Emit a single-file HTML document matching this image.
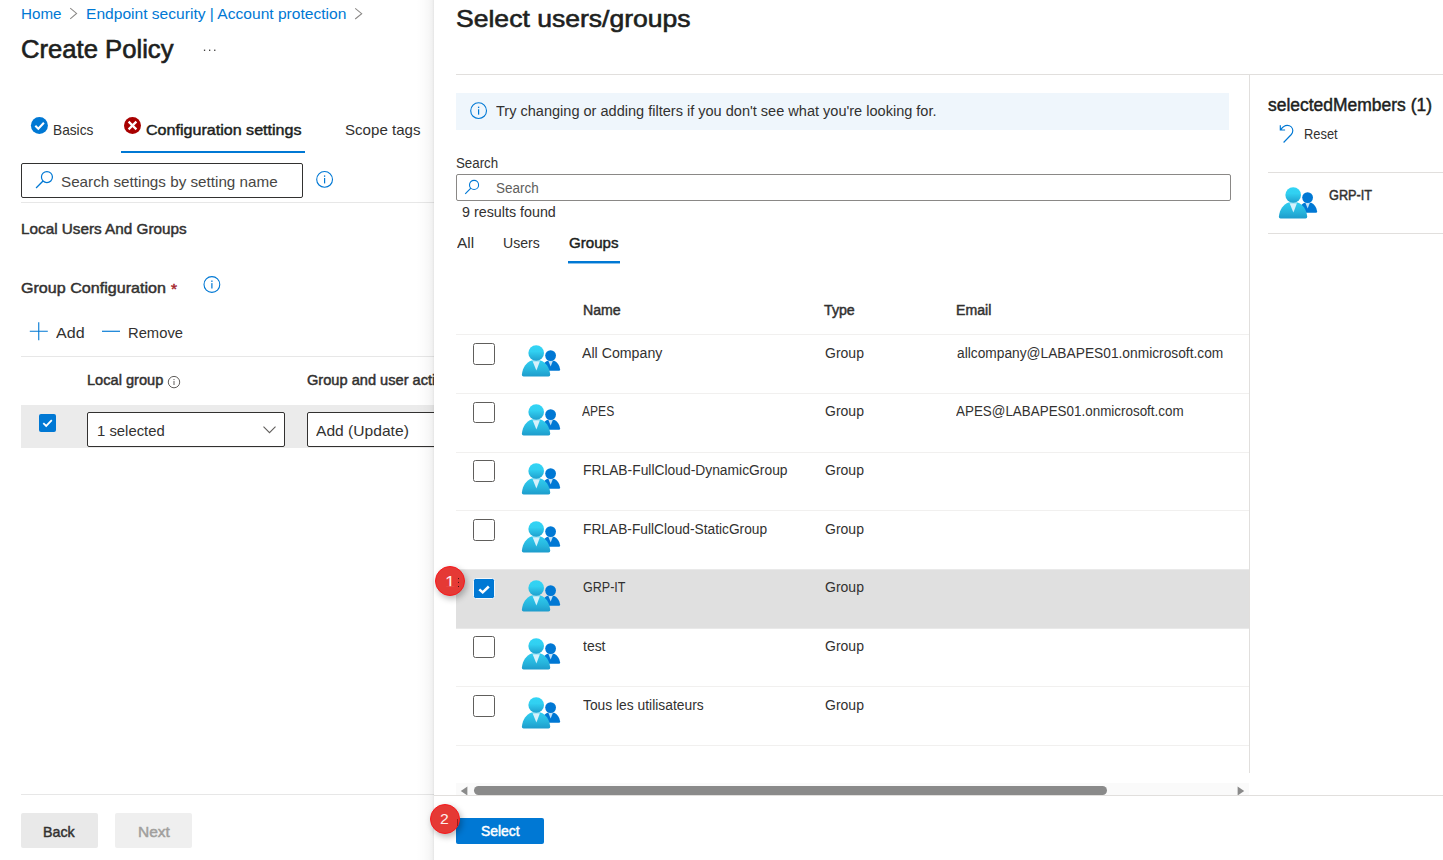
<!DOCTYPE html>
<html lang="en">
<head>
<meta charset="utf-8">
<title>Create Policy - Select users/groups</title>
<style>
*{box-sizing:border-box;margin:0;padding:0}
html,body{width:1443px;height:860px;overflow:hidden;background:#fff}
body{font-family:"Liberation Sans",sans-serif;position:relative;color:#323130}
.t{position:absolute;white-space:nowrap;line-height:20px;display:block;transform-origin:0 50%}
.a{position:absolute;display:block}
.hl{position:absolute;height:1px;background:#e1dfdd}
#left{position:absolute;left:0;top:0;width:434px;height:860px;overflow:hidden;background:#fff}
#panel{position:absolute;left:434px;top:0;width:1009px;height:860px;background:#fff;}
#pin{position:absolute;left:-434px;top:0;width:1443px;height:860px}
.cb{position:absolute;left:473.2px;width:21.6px;height:21.6px;border:1px solid #605e5c;border-radius:2.5px;background:#fff}
.gi{position:absolute;width:40px;height:34px}
</style>
</head>
<body>
<svg width="0" height="0" style="position:absolute">
<defs>
<linearGradient id="gg" x1="0" y1="0" x2="0" y2="1"><stop offset="0" stop-color="#32d4f5"/><stop offset="1" stop-color="#198ab3"/></linearGradient>
<linearGradient id="gh" x1="0" y1="0" x2="0" y2="1"><stop offset="0" stop-color="#32d4f5"/><stop offset="0.4" stop-color="#31d0f1"/><stop offset="1" stop-color="#1fa0ce"/></linearGradient>
<linearGradient id="gb" x1="0" y1="0" x2="0" y2="1"><stop offset="0" stop-color="#30cdf0"/><stop offset="0.6" stop-color="#27b4dc"/><stop offset="1" stop-color="#1e9ccc"/></linearGradient>
<symbol id="grp" viewBox="0 0 40 34">
<path d="M24.2 26.8 L37.9 26.8 Q39.3 26.8 39.1 25.3 C38.4 21.2 36.3 18 33.2 16.8 L26.4 16.8 C24.5 17.6 23 19 22 21 Z" fill="#0078d4"/>
<circle cx="29.6" cy="11.6" r="5.4" fill="#0078d4"/>
<path d="M27.4 17 L31.8 17 L29.7 22.6 Z" fill="#c3e1f6"/>
<path d="M2.6 32.4 Q0.7 32.4 0.9 30.4 C1.7 23.6 5.2 18.4 10.6 16.5 L19.6 16.5 C25 18.4 28.4 23.6 29.2 30.4 Q29.4 32.4 27.5 32.4 Z" fill="url(#gb)"/>
<circle cx="15.2" cy="9" r="7.8" fill="url(#gh)"/>
<path d="M11.6 17.2 L18.9 17.2 L15.4 26.6 Z" fill="#d6f1fb"/>
</symbol>
<symbol id="info" viewBox="0 0 18 18">
<circle cx="9" cy="9" r="7.9" fill="none" stroke="#0078d4" stroke-width="1.1"/>
<rect x="8.4" y="7.6" width="1.2" height="5.4" fill="#0078d4"/>
<rect x="8.35" y="5" width="1.3" height="1.4" fill="#0078d4"/>
</symbol>
<symbol id="mag" viewBox="0 0 18 18">
<circle cx="11.3" cy="6.7" r="5.2" fill="none" stroke="#0078d4" stroke-width="1.15"/>
<path d="M7.6 10.4 L1 17" stroke="#0078d4" stroke-width="1.2" fill="none"/>
</symbol>
</defs>
</svg>

<div id="left">
  <!-- breadcrumb chevrons, more dots -->
  <svg class="a" style="left:69px;top:7px" width="9" height="13" viewBox="0 0 9 13"><path d="M1.2 1.1 L7.6 6.45 L1.2 11.8" stroke="#8a8886" stroke-width="1.05" fill="none"/></svg>
  <svg class="a" style="left:354px;top:7px" width="9" height="13" viewBox="0 0 9 13"><path d="M1.2 1.3 L7.7 6.65 L1.2 12" stroke="#8a8886" stroke-width="1.05" fill="none"/></svg>
  <svg class="a" style="left:203px;top:49px" width="14" height="3" viewBox="0 0 14 3"><rect x="0.9" y="0.6" width="1.3" height="1.3" fill="#323130"/><rect x="6" y="0.6" width="1.3" height="1.3" fill="#323130"/><rect x="11.1" y="0.6" width="1.3" height="1.3" fill="#323130"/></svg>
  <!-- tab icons -->
  <svg class="a" style="left:30px;top:116px" width="20" height="20" viewBox="0 0 20 20"><g transform="translate(0.4,0.5)"><circle cx="9" cy="9" r="8.5" fill="#0078d4"/><path d="M4.9 9.3 L7.9 12.2 L13.5 6.2" stroke="#fff" stroke-width="2.1" fill="none"/></g></svg>
  <svg class="a" style="left:123px;top:116px" width="20" height="20" viewBox="0 0 20 20"><g transform="translate(0.5,0.5)"><circle cx="9" cy="9" r="8.5" fill="#a80000"/><path d="M5.1 5.1 L12.9 12.9 M12.9 5.1 L5.1 12.9" stroke="#fff" stroke-width="2.2" fill="none"/></g></svg>
  <div class="a" style="left:121px;top:151px;width:184px;height:2px;background:#0078d4"></div>
  <!-- search box -->
  <div class="a" style="left:21px;top:163px;width:282px;height:35px;border:1px solid #323130;border-radius:2px;background:#fff"></div>
  <svg class="a" style="left:35.4px;top:170.2px" width="19" height="19"><use href="#mag"/></svg>
  <svg class="a" style="left:315px;top:170px" width="20" height="20"><use href="#info" x="0.6" y="0.4" width="18" height="18"/></svg>
  <div class="hl" style="left:21px;top:202px;width:413px;background:#e7e7e7"></div>
  <svg class="a" style="left:202px;top:275px" width="20" height="20"><use href="#info" x="0.9" y="0.5" width="18" height="18"/></svg>
  <!-- add / remove -->
  <svg class="a" style="left:29px;top:321px" width="20" height="21" viewBox="0 0 20 21"><path d="M9.75 1.3 V19.3 M0.8 10.3 H18.8" stroke="#0078d4" stroke-width="1.1" fill="none"/></svg>
  <svg class="a" style="left:101px;top:329px" width="20" height="4" viewBox="0 0 20 4"><rect x="1" y="1.7" width="18" height="1.15" fill="#0078d4"/></svg>
  <div class="hl" style="left:21px;top:356px;width:413px;background:#e7e7e7"></div>
  <!-- small info -->
  <svg class="a" style="left:167px;top:375px" width="14" height="14" viewBox="-0.5 -0.6 14 14"><circle cx="6.5" cy="6.5" r="5.7" fill="none" stroke="#605e5c" stroke-width="1"/><rect x="6" y="5.4" width="1" height="4" fill="#605e5c"/><rect x="6" y="3.4" width="1" height="1.1" fill="#605e5c"/></svg>
  <!-- row -->
  <div class="a" style="left:21px;top:405px;width:413px;height:43px;background:#ebebeb"></div>
  <div class="a" style="left:39px;top:414px;width:17px;height:18px;background:#0078d4;border-radius:2px"></div>
  <svg class="a" style="left:39px;top:414px" width="18" height="18" viewBox="0 0 18 18"><path d="M4.3 9.2 L7.2 12 L12.8 6.2" stroke="#fff" stroke-width="1.8" fill="none"/></svg>
  <div class="a" style="left:87px;top:412px;width:198px;height:34.6px;border:1px solid #323130;border-radius:2px;background:#fff"></div>
  <svg class="a" style="left:262px;top:424px" width="15" height="11" viewBox="0 0 15 11"><path d="M1.5 2.6 L7.5 8.6 L13.5 2.6" stroke="#605e5c" stroke-width="1.1" fill="none"/></svg>
  <div class="a" style="left:307px;top:412px;width:198px;height:34.6px;border:1px solid #323130;border-radius:2px;background:#fff"></div>
  <!-- footer -->
  <div class="hl" style="left:21px;top:794px;width:413px;background:#e7e7e7"></div>
  <div class="a" style="left:21px;top:813px;width:77px;height:35px;background:#e9e9e9;border-radius:2px"></div>
  <div class="a" style="left:115px;top:813px;width:77px;height:35px;background:#efefef;border-radius:2px"></div>
<span class="t" id="t0" style="left:21.27px;top:4.00px;font-size:15px;font-weight:400;color:#0078d4;transform:scaleX(1.0123);">Home</span>
<span class="t" id="t1" style="left:86.18px;top:4.00px;font-size:15px;font-weight:400;color:#0078d4;transform:scaleX(1.0385);">Endpoint security | Account protection</span>
<span class="t" id="t2" style="left:21.32px;top:39.14px;font-size:25px;font-weight:400;color:#201f1e;transform:scaleX(1.0255);-webkit-text-stroke:0.62px #201f1e;">Create Policy</span>
<span class="t" id="t3" style="left:53.04px;top:119.80px;font-size:15px;font-weight:400;color:#323130;transform:scaleX(0.9139);">Basics</span>
<span class="t" id="t4" style="left:146.09px;top:119.80px;font-size:15px;font-weight:400;color:#201f1e;transform:scaleX(1.0718);-webkit-text-stroke:0.46px #201f1e;">Configuration settings</span>
<span class="t" id="t5" style="left:345.14px;top:119.80px;font-size:15px;font-weight:400;color:#323130;transform:scaleX(1.0059);">Scope tags</span>
<span class="t" id="t6" style="left:61.13px;top:172.00px;font-size:15px;font-weight:400;color:#484644;transform:scaleX(1.0149);">Search settings by setting name</span>
<span class="t" id="t7" style="left:20.97px;top:219.00px;font-size:15px;font-weight:400;color:#323130;transform:scaleX(1.0187);-webkit-text-stroke:0.46px #323130;">Local Users And Groups</span>
<span class="t" id="t8" style="left:20.99px;top:278.00px;font-size:15px;font-weight:400;color:#323130;transform:scaleX(1.0726);-webkit-text-stroke:0.46px #323130;">Group Configuration</span>
<span class="t" id="t9" style="left:170.95px;top:279.30px;font-size:15px;font-weight:400;color:#a4262c;transform:scaleX(1.0301);-webkit-text-stroke:0.46px #a4262c;">*</span>
<span class="t" id="t10" style="left:55.65px;top:323.00px;font-size:15px;font-weight:400;color:#323130;transform:scaleX(1.0700);">Add</span>
<span class="t" id="t11" style="left:128.37px;top:323.00px;font-size:15px;font-weight:400;color:#323130;transform:scaleX(0.9841);">Remove</span>
<span class="t" id="t12" style="left:87.24px;top:370.35px;font-size:14px;font-weight:400;color:#323130;transform:scaleX(1.0426);-webkit-text-stroke:0.46px #323130;">Local group</span>
<span class="t" id="t13" style="left:306.78px;top:370.35px;font-size:14px;font-weight:400;color:#323130;transform:scaleX(1.0434);-webkit-text-stroke:0.46px #323130;">Group and user actions</span>
<span class="t" id="t14" style="left:97.42px;top:421.00px;font-size:15px;font-weight:400;color:#323130;transform:scaleX(0.9909);">1 selected</span>
<span class="t" id="t15" style="left:316.00px;top:421.00px;font-size:15px;font-weight:400;color:#323130;transform:scaleX(1.0405);">Add (Update)</span>
<span class="t" id="t16" style="left:43.30px;top:822.00px;font-size:15px;font-weight:400;color:#323130;transform:scaleX(0.9483);-webkit-text-stroke:0.46px #323130;">Back</span>
<span class="t" id="t17" style="left:137.60px;top:822.00px;font-size:15px;font-weight:400;color:#a19f9d;transform:scaleX(1.0354);-webkit-text-stroke:0.46px #a19f9d;">Next</span>
</div>

<div class="a" style="left:416px;top:0;width:18px;height:860px;background:linear-gradient(to right,rgba(0,0,0,0),rgba(0,0,0,.012) 40%,rgba(0,0,0,.03) 72%,rgba(0,0,0,.055) 90%,rgba(0,0,0,.1))"></div>
<div id="panel"><div id="pin">
  <div class="hl" style="left:456px;top:74px;width:987px"></div>
  <div class="a" style="left:1249px;top:74px;width:1px;height:699px;background:#e1dfdd"></div>
  <!-- info bar -->
  <div class="a" style="left:456px;top:93px;width:773px;height:37px;background:#eff6fc"></div>
  <svg class="a" style="left:469px;top:101px" width="20" height="20"><use href="#info" x="0.6" y="0.65" width="18" height="18"/></svg>
  <!-- search -->
  <div class="a" style="left:456px;top:174px;width:775px;height:27px;border:1px solid #8a8886;border-radius:2px;background:#fff"></div>
  <svg class="a" style="left:464px;top:179px" width="17" height="17" viewBox="0 0 17 17"><circle cx="10.05" cy="5.9" r="4.55" fill="none" stroke="#0078d4" stroke-width="1.1"/><path d="M6.9 9.2 L1.2 14.9" stroke="#0078d4" stroke-width="1.15" fill="none"/></svg>
  <div class="a" style="left:568px;top:261px;width:52px;height:2px;background:#0078d4"></div><div class="a" style="left:568px;top:263px;width:52px;height:1px;background:#0078d4;opacity:.45"></div>
  <!-- rows -->
  <div class="a" style="left:456px;top:570px;width:793px;height:58px;background:#e0e0e0"></div><div class="a" style="left:456px;top:569px;width:793px;height:1px;background:#e0e0e0;opacity:.7"></div><div class="a" style="left:456px;top:628px;width:793px;height:1px;background:#e0e0e0;opacity:.7"></div>
  <div class="hl" style="left:456px;top:334px;width:793px;background:#f1f0ef"></div>
  <div class="hl" style="left:456px;top:393px;width:793px;background:#f1f0ef"></div>
  <div class="hl" style="left:456px;top:452px;width:793px;background:#f1f0ef"></div>
  <div class="hl" style="left:456px;top:510px;width:793px;background:#f1f0ef"></div>
  <div class="hl" style="left:456px;top:686px;width:793px;background:#f1f0ef"></div>
  <div class="hl" style="left:456px;top:745px;width:793px;background:#f1f0ef"></div>
  <div class="cb" style="top:343.2px"></div>
  <div class="cb" style="top:401.6px"></div>
  <div class="cb" style="top:460.4px"></div>
  <div class="cb" style="top:519.2px"></div>
  <div class="cb" style="top:577.7px;background:#0078d4;border-color:#f3f8fc"></div>
  <svg class="a" style="left:474px;top:578.5px" width="20" height="20" viewBox="0 0 20 20"><path d="M5.3 10.3 L8.7 13.4 L14.8 7.5" stroke="#fff" stroke-width="2.5" fill="none"/></svg>
  <div class="cb" style="top:636px"></div>
  <div class="cb" style="top:695.3px"></div>
  <svg class="gi" style="left:521px;top:344.2px"><use href="#grp"/></svg>
  <svg class="gi" style="left:521px;top:402.9px"><use href="#grp"/></svg>
  <svg class="gi" style="left:521px;top:461.6px"><use href="#grp"/></svg>
  <svg class="gi" style="left:521px;top:520.3px"><use href="#grp"/></svg>
  <svg class="gi" style="left:521px;top:579px"><use href="#grp"/></svg>
  <svg class="gi" style="left:521px;top:637px"><use href="#grp"/></svg>
  <svg class="gi" style="left:521px;top:695.7px"><use href="#grp"/></svg>
  <!-- scrollbar -->
  <div class="a" style="left:456px;top:783px;width:793px;height:12px;background:#fafafa"></div>
  <div class="a" style="left:474px;top:786px;width:633px;height:8.5px;background:#8a8a8a;border-radius:4.5px"></div>
  <svg class="a" style="left:460px;top:785.5px" width="8" height="10" viewBox="0 0 8 10"><path d="M7.4 0.6 L0.8 5 L7.4 9.4 Z" fill="#8a8a8a"/></svg>
  <svg class="a" style="left:1237px;top:785.5px" width="8" height="10" viewBox="0 0 8 10"><path d="M0.6 0.6 L7.2 5 L0.6 9.4 Z" fill="#8a8a8a"/></svg>
  <div class="hl" style="left:434px;top:795px;width:1009px"></div>
  <!-- select button -->
  <div class="a" style="left:456px;top:818px;width:88px;height:25.6px;background:#0078d4;border-radius:2px"></div>
  <!-- right list -->
  <svg class="a" style="left:1278px;top:124px" width="17" height="20" viewBox="0 0 17 20"><path d="M2.3 1.2 V6 H7.1 M2.8 5.6 C4.5 3 6.5 1.3 9.2 1.3 C12.4 1.3 14.8 3.6 14.8 6.6 C14.8 8.3 14.2 9.5 13.3 10.5 L5.6 18.5" stroke="#0078d4" stroke-width="1.15" fill="none"/></svg>
  <div class="hl" style="left:1268px;top:172px;width:175px"></div>
  <svg class="gi" style="left:1277.9px;top:186.2px"><use href="#grp"/></svg>
  <div class="hl" style="left:1268px;top:233px;width:175px"></div>
<span class="t" id="t18" style="left:455.95px;top:8.51px;font-size:24.5px;font-weight:400;color:#201f1e;transform:scaleX(1.0835);-webkit-text-stroke:0.61px #201f1e;">Select users/groups</span>
<span class="t" id="t19" style="left:496.25px;top:101.15px;font-size:14px;font-weight:400;color:#323130;transform:scaleX(1.0383);">Try changing or adding filters if you don't see what you're looking for.</span>
<span class="t" id="t20" style="left:456.28px;top:153.15px;font-size:14px;font-weight:400;color:#323130;transform:scaleX(0.9499);">Search</span>
<span class="t" id="t21" style="left:495.97px;top:178.35px;font-size:14px;font-weight:400;color:#605e5c;transform:scaleX(0.9628);">Search</span>
<span class="t" id="t22" style="left:461.87px;top:202.15px;font-size:14px;font-weight:400;color:#323130;transform:scaleX(1.0212);">9 results found</span>
<span class="t" id="t23" style="left:456.70px;top:233.20px;font-size:15px;font-weight:400;color:#323130;transform:scaleX(1.0222);">All</span>
<span class="t" id="t24" style="left:502.86px;top:233.20px;font-size:15px;font-weight:400;color:#323130;transform:scaleX(0.9397);">Users</span>
<span class="t" id="t25" style="left:569.35px;top:233.20px;font-size:15px;font-weight:400;color:#201f1e;transform:scaleX(1.0058);-webkit-text-stroke:0.46px #201f1e;">Groups</span>
<span class="t" id="t26" style="left:582.85px;top:299.75px;font-size:14px;font-weight:400;color:#323130;transform:scaleX(1.0095);-webkit-text-stroke:0.46px #323130;">Name</span>
<span class="t" id="t27" style="left:824.11px;top:299.75px;font-size:14px;font-weight:400;color:#323130;transform:scaleX(1.0135);-webkit-text-stroke:0.46px #323130;">Type</span>
<span class="t" id="t28" style="left:956.11px;top:299.75px;font-size:14px;font-weight:400;color:#323130;transform:scaleX(1.0087);-webkit-text-stroke:0.46px #323130;">Email</span>
<span class="t" id="t29" style="left:582.49px;top:342.85px;font-size:14px;font-weight:400;color:#323130;transform:scaleX(1.0125);">All Company</span>
<span class="t" id="t30" style="left:825.33px;top:342.85px;font-size:14px;font-weight:400;color:#323130;transform:scaleX(1.0004);">Group</span>
<span class="t" id="t31" style="left:957.24px;top:342.85px;font-size:14px;font-weight:400;color:#323130;transform:scaleX(0.9826);">allcompany@LABAPES01.onmicrosoft.com</span>
<span class="t" id="t32" style="left:582.04px;top:400.57px;font-size:14px;font-weight:400;color:#323130;transform:scaleX(0.8622);">APES</span>
<span class="t" id="t33" style="left:825.33px;top:400.57px;font-size:14px;font-weight:400;color:#323130;transform:scaleX(1.0004);">Group</span>
<span class="t" id="t34" style="left:955.81px;top:400.57px;font-size:14px;font-weight:400;color:#323130;transform:scaleX(0.9583);">APES@LABAPES01.onmicrosoft.com</span>
<span class="t" id="t35" style="left:582.56px;top:460.29px;font-size:14px;font-weight:400;color:#323130;transform:scaleX(0.9883);">FRLAB-FullCloud-DynamicGroup</span>
<span class="t" id="t36" style="left:825.33px;top:460.29px;font-size:14px;font-weight:400;color:#323130;transform:scaleX(1.0004);">Group</span>
<span class="t" id="t37" style="left:582.57px;top:519.01px;font-size:14px;font-weight:400;color:#323130;transform:scaleX(0.9819);">FRLAB-FullCloud-StaticGroup</span>
<span class="t" id="t38" style="left:825.33px;top:519.01px;font-size:14px;font-weight:400;color:#323130;transform:scaleX(1.0004);">Group</span>
<span class="t" id="t39" style="left:583.36px;top:576.73px;font-size:14px;font-weight:400;color:#323130;transform:scaleX(0.8959);">GRP-IT</span>
<span class="t" id="t40" style="left:825.33px;top:576.73px;font-size:14px;font-weight:400;color:#323130;transform:scaleX(1.0004);">Group</span>
<span class="t" id="t41" style="left:582.80px;top:636.45px;font-size:14px;font-weight:400;color:#323130;transform:scaleX(0.9967);">test</span>
<span class="t" id="t42" style="left:825.33px;top:636.45px;font-size:14px;font-weight:400;color:#323130;transform:scaleX(1.0004);">Group</span>
<span class="t" id="t43" style="left:583.12px;top:695.17px;font-size:14px;font-weight:400;color:#323130;transform:scaleX(0.9876);">Tous les utilisateurs</span>
<span class="t" id="t44" style="left:825.33px;top:695.17px;font-size:14px;font-weight:400;color:#323130;transform:scaleX(1.0004);">Group</span>
<span class="t" id="t45" style="left:1268.29px;top:95.06px;font-size:18px;font-weight:400;color:#201f1e;transform:scaleX(0.9699);-webkit-text-stroke:0.46px #201f1e;">selectedMembers (1)</span>
<span class="t" id="t46" style="left:1303.67px;top:124.15px;font-size:14px;font-weight:400;color:#323130;transform:scaleX(0.9192);">Reset</span>
<span class="t" id="t47" style="left:1329.08px;top:185.15px;font-size:14px;font-weight:400;color:#323130;transform:scaleX(0.9084);-webkit-text-stroke:0.46px #323130;">GRP-IT</span>
<span class="t" id="t48" style="left:480.84px;top:821.15px;font-size:14px;font-weight:400;color:#ffffff;transform:scaleX(0.9929);-webkit-text-stroke:0.46px #ffffff;">Select</span>
</div></div>

<!-- badges -->
<div class="a" style="left:435px;top:566.3px;width:30.2px;height:30.2px;border-radius:50%;background:#e53935;border:1.4px solid #f8181c;box-shadow:2px 3px 6px rgba(0,0,0,.28)"></div>
<svg class="a" style="left:456.5px;top:577px" width="3" height="11" viewBox="0 0 3 11"><rect x="1" y="1.1" width="1" height="1" fill="#3a1212"/><rect x="1" y="4.9" width="1" height="1" fill="#3a1212"/><rect x="1" y="9" width="1" height="1" fill="#3a1212"/></svg>
<div class="a" style="left:429.8px;top:804.1px;width:30.2px;height:30.2px;border-radius:50%;background:#e53935;border:1.4px solid #f8181c;box-shadow:2px 3px 6px rgba(0,0,0,.28)"></div>
<div class="a" style="left:456.5px;top:818.5px;width:1px;height:7px;background:#8a1512;opacity:.8"></div>
<span class="t" id="t49" style="left:445.09px;top:573.11px;font-size:17px;font-weight:400;color:#fdeeee;transform:scaleX(1.0670);clip-path:inset(0 0 6.9px 0);">1</span>
<span class="t" id="t50" style="left:440.40px;top:808.63px;font-size:15.5px;font-weight:400;color:#fdeeee;transform:scaleX(1.0170);">2</span>
</body>
</html>
